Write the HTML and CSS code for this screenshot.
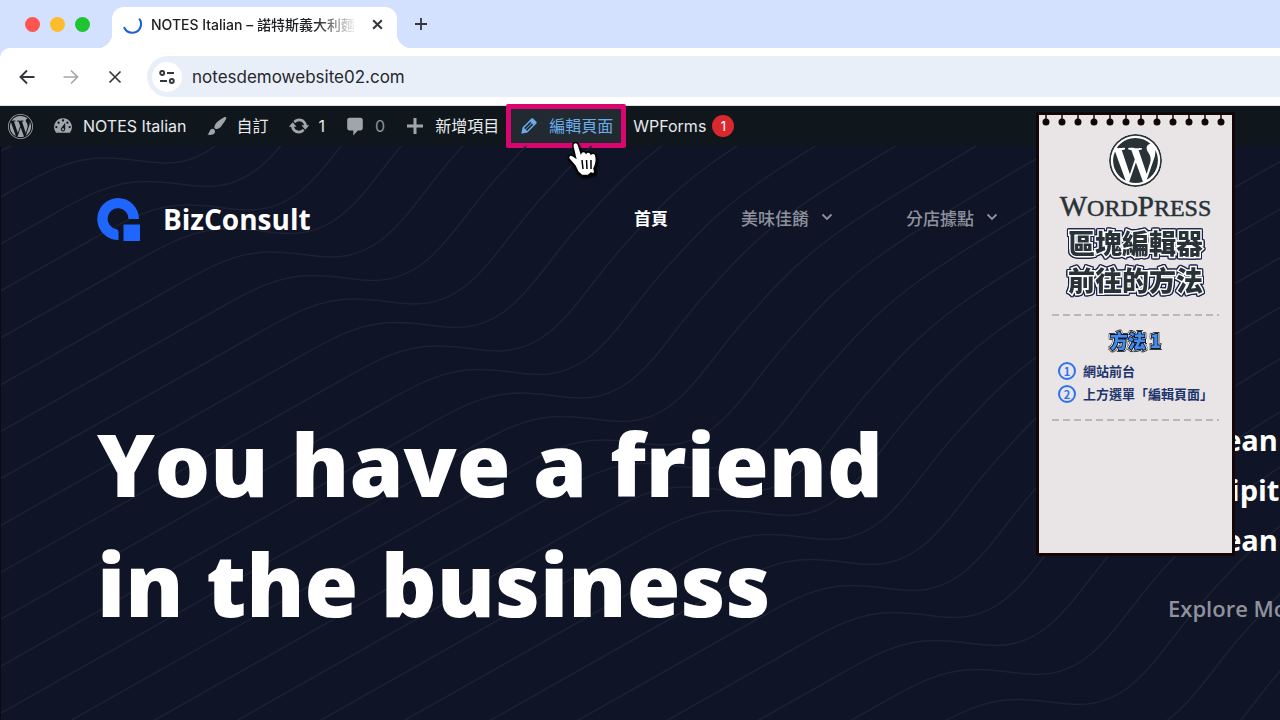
FILE: index.html
```
<!DOCTYPE html>
<html lang="zh-Hant">
<head>
  <meta charset="UTF-8">
  <meta name="viewport" content="width=device-width, initial-scale=1">
  <title>NOTES Italian – 諾特斯義大利麵</title>
  <link rel="stylesheet" href="styles.css">
</head>
<body>

<svg class="defs" aria-hidden="true">
  <symbol id="wp-logo" viewBox="0 0 24 24">
    <path d="M12 0a12 12 0 1 0 0 24 12 12 0 0 0 0-24zm0 .8a11.200 11.200 0 1 1 0 22.400A11.200 11.200 0 0 1 12 .8z" fill-rule="evenodd"/>
    <path transform="translate(.72 .72) scale(.94)" d="M21.469 6.825c.84 1.537 1.318 3.3 1.318 5.175 0 3.979-2.156 7.456-5.363 9.325l3.295-9.527c.615-1.54.82-2.771.82-3.864 0-.405-.026-.78-.07-1.11m-7.981.105c.647-.03 1.232-.105 1.232-.105.582-.075.514-.93-.067-.899 0 0-1.755.135-2.88.135-1.064 0-2.85-.15-2.85-.15-.585-.03-.661.855-.075.885 0 0 .54.061 1.125.09l1.68 4.605-2.37 7.08L5.354 6.9c.649-.03 1.234-.1 1.234-.1.585-.075.516-.93-.065-.896 0 0-1.746.138-2.874.138-.2 0-.438-.008-.69-.015C4.911 3.15 8.235 1.215 12 1.215c2.809 0 5.365 1.072 7.286 2.833-.046-.003-.091-.009-.141-.009-1.06 0-1.812.923-1.812 1.914 0 .89.513 1.643 1.06 2.531.411.72.89 1.643.89 2.977 0 .915-.354 1.994-.821 3.479l-1.075 3.585-3.9-11.61.001.014zM12 22.784c-1.059 0-2.081-.153-3.048-.437l3.237-9.406 3.315 9.087c.024.053.05.101.078.149-1.12.393-2.325.609-3.582.609M1.211 12c0-1.564.336-3.05.935-4.39L7.29 21.709C3.694 19.96 1.212 16.271 1.211 12"/>
  </symbol>
  <symbol id="chevron" viewBox="0 0 12 12"><path d="M1.5 3.5 6 8l4.5-4.5" fill="none" stroke="currentColor" stroke-width="1.8"/></symbol>
</svg>

<header class="browser">
  <div class="tab-strip">
    <div class="lights">
      <span class="light red"></span>
      <span class="light yellow"></span>
      <span class="light green"></span>
    </div>
    <div class="tab">
      <svg class="spinner" viewBox="0 0 20 20"><path d="M1.400 13.500A9.300 9.300 0 0 0 18.500 12.500A9.300 9.300 0 0 0 17.500 4.500" fill="none" stroke="#1a62d6" stroke-width="2.200" stroke-linecap="round"/></svg>
      <span class="tab-title">NOTES Italian – 諾特斯義大利麵</span>
      <button class="tab-close" aria-label="Close tab"><svg viewBox="0 0 12 12"><path d="M2 2l8 8M10 2l-8 8" stroke="currentColor" stroke-width="1.900"/></svg></button>
    </div>
    <button class="new-tab" aria-label="New tab"><svg viewBox="0 0 14 14"><path d="M7 1v12M1 7h12" stroke="currentColor" stroke-width="1.800"/></svg></button>
  </div>
  <div class="toolbar">
    <button class="tool" aria-label="Back"><svg viewBox="0 0 16 16"><path d="M15.500 8H1.500M8 1.500 1.500 8 8 14.500" fill="none" stroke="currentColor" stroke-width="1.900"/></svg></button>
    <button class="tool off" aria-label="Forward" disabled><svg viewBox="0 0 16 16"><path d="M.5 8h14M8 1.500 14.500 8 8 14.500" fill="none" stroke="currentColor" stroke-width="1.700"/></svg></button>
    <button class="tool" aria-label="Stop"><svg viewBox="0 0 16 16"><path d="M2.500 2.500l11 11M13.500 2.500l-11 11" stroke="currentColor" stroke-width="1.700"/></svg></button>
    <div class="address">
      <button class="site-info" aria-label="Site information"><svg viewBox="0 0 16 16" fill="none" stroke="currentColor" stroke-width="1.900"><circle cx="3.200" cy="4" r="2"/><path d="M8 4h7M1 12h7"/><circle cx="12.800" cy="12" r="2"/></svg></button>
      <input class="url" type="text" aria-label="Address" value="notesdemowebsite02.com">
    </div>
  </div>
</header>

<nav class="admin-bar" aria-label="Toolbar">
  <a href="#" aria-label="WordPress"><svg class="wp"><use href="#wp-logo"/></svg></a>
  <a href="#"><svg viewBox="1 1 18 18"><path d="M3.760 16h12.480A7.998 7.998 0 0 0 10 3a7.998 7.998 0 0 0-6.240 13zM10 4c.55 0 1 .45 1 1s-.45 1-1 1-1-.45-1-1 .45-1 1-1zM6 6c.55 0 1 .45 1 1s-.45 1-1 1-1-.45-1-1 .45-1 1-1zm8 0c.55 0 1 .45 1 1s-.45 1-1 1-1-.45-1-1 .45-1 1-1zm-5.370 5.550L12 7v6c0 1.100-.9 2-2 2s-2-.9-2-2c0-.57.24-1.080.63-1.450zM4 10c.55 0 1 .45 1 1s-.45 1-1 1-1-.45-1-1 .45-1 1-1zm12 0c.55 0 1 .45 1 1s-.45 1-1 1-1-.45-1-1 .45-1 1-1zm-5 3c0-.55-.45-1-1-1s-1 .45-1 1 .45 1 1 1 1-.45 1-1z"/></svg>NOTES Italian</a>
  <a href="#"><svg viewBox="1 1 18 18"><path d="M18.330 3.570s.27-.8-.31-1.360c-.53-.52-1.220-.24-1.220-.24-.61.3-5.760 3.470-7.670 5.570-.86.96-2.060 3.790-1.090 4.820.92.98 3.960-.17 4.790-1 2.060-2.060 5.210-7.170 5.500-7.790zM1.400 17.650c2.370-1.560 1.460-3.410 3.230-4.640.93-.65 2.220-.62 3.080.29.63.67.8 2.570-.16 3.460-1.570 1.450-4 1.550-6.150.89z"/></svg>自訂</a>
  <a href="#"><svg viewBox="1 1 18 18"><path d="M10.200 3.280c3.530 0 6.430 2.610 6.920 6h2.080l-3.500 4-3.500-4h2.320c-.45-1.970-2.210-3.450-4.320-3.450-1.450 0-2.730.71-3.540 1.780L4.950 5.660C6.230 4.200 8.110 3.280 10.200 3.280zm-.4 13.440c-3.520 0-6.430-2.610-6.920-6H.8l3.500-4c1.170 1.330 2.330 2.670 3.500 4H5.480c.45 1.970 2.210 3.450 4.320 3.450 1.450 0 2.730-.71 3.540-1.780l1.710 1.950c-1.280 1.460-3.150 2.380-5.250 2.380z"/></svg>1</a>
  <a href="#" class="dim"><svg viewBox="1 1 18 18"><path d="M5 2.500h10c1.100 0 2 .9 2 2V12c0 1.100-.9 2-2 2h-2.500L8.500 18.500V14H5c-1.100 0-2-.9-2-2V4.500c0-1.100.9-2 2-2z"/></svg>0</a>
  <a href="#"><svg viewBox="0 0 20 20"><path d="M8.500 2h3v6.500H18v3h-6.500V18h-3v-6.500H2v-3h6.500z"/></svg>新增項目</a>
  <a href="#" class="edit"><svg viewBox="1 1 18 18"><path d="M13.890 3.390l2.710 2.720c.46.46.42 1.240.03 1.640l-8.010 8.020-5.560 1.160 1.160-5.580s7.600-7.630 7.990-8.030c.39-.39 1.220-.39 1.680.07zm-2.730 2.790l-5.590 5.610 1.110 1.110 5.540-5.650zm-2.970 8.230l5.580-5.600-1.070-1.080-5.590 5.600z"/></svg>編輯頁面</a>
  <a href="#" class="forms">WPForms <span class="badge">1</span></a>
</nav>

<main class="hero">
  <svg class="waves" id="waves" viewBox="0 146 1280 574" preserveAspectRatio="xMinYMin slice" aria-hidden="true"></svg>

  <div class="site-nav">
    <a class="brand" href="#">
      <svg viewBox="0 0 43 43" fill="#1f66ff"><path d="M21 0A21 21 0 0 1 42 21H31.500A10.500 10.500 0 1 0 19 31Q21.500 31.500 21.500 34V42A21 21 0 0 1 21 0z"/><path d="M26.500 26.500H43V43H26.500z"/></svg>
      BizConsult
    </a>
    <nav class="menu" aria-label="Main">
      <a class="current" href="#">首頁</a>
      <a href="#">美味佳餚 <svg><use href="#chevron"/></svg></a>
      <a href="#">分店據點 <svg><use href="#chevron"/></svg></a>
    </nav>
  </div>

  <div class="hero-body">
    <h1>You have a friend<br>in the business</h1>
    <div class="intro">
      <p>Aenean<br>suscipit<br>Aenean</p>
      <a href="#">Explore More</a>
    </div>
  </div>
</main>

<aside class="note">
  <svg class="rings" viewBox="0 0 191 14" aria-hidden="true">
    <path d="M6 0v7M22 0v7M38 0v7M54 0v7M70 0v7M86 0v7M101 0v7M117 0v7M133 0v7M149 0v7M165 0v7M181 0v7" stroke="#140607" stroke-width="1.500"/>
    <path d="M6 7h0M22 7h0M38 7h0M54 7h0M70 7h0M86 7h0M101 7h0M117 7h0M133 7h0M149 7h0M165 7h0M181 7h0" stroke="#140607" stroke-width="7" stroke-linecap="round"/>
  </svg>
  <svg class="note-logo"><use href="#wp-logo"/></svg>
  <div class="wordmark"><b>W</b>ORD<b>P</b>RESS</div>
  <h2>區塊編輯器<br>前往的方法</h2>
  <hr>
  <h3>方法 1</h3>
  <ol>
    <li>網站前台</li>
    <li>上方選單「編輯頁面」</li>
  </ol>
  <hr>
</aside>

<svg class="pointer" viewBox="0 0 36 38" aria-hidden="true">
  <path d="M9 3c2-1 4 0 4.500 2L16 13c1-2 4-2 5 0 1-1.500 4-1.500 5 1 2-1.500 5-.5 5 2.500 1 5 0 8-2 12l1 4-3 1.500-1-1-3 2.500h-6l-4-3.500-3-6-6-7c-1.500-2.500 1-5 3.500-3.500l3 2L8 7C7.500 5 7.500 4 9 3z" fill="#fff" stroke="#000" stroke-width="1.500"/>
  <path d="M17 20l1 9M21.500 20l.5 9M26 20v9" stroke="#000" stroke-width="1.500"/>
</svg>

<script>
  // the same curve repeated down the diagonal
  const waves = document.getElementById("waves");
  for (let k = -5; k <= 32; k++) {
    const extra = k > 15 ? (k - 15) * (k - 15) * 0.5 : 0;
    const path = document.createElementNS("http://www.w3.org/2000/svg", "path");
    path.setAttribute("d", "M-1400 731L-160 31C-120 8-95-5-61-5C-35-5-20 0 0 0C60 0 82-60 131-111C190-178 220-195 351-274L1100-700");
    path.setAttribute("transform", `translate(${165 + k * 41.5} ${163 + k * 23.5 + extra})`);
    waves.appendChild(path);
  }
</script>

</body>
</html>
```
FILE: styles.css
```
* {
  box-sizing: border-box;
}
body {
  margin: 0;
  height: 100vh;
  display: flex;
  flex-direction: column;
  position: relative;
  overflow: hidden;
  background: #0f1426;
  font-family: Inter, "Noto Sans CJK TC", sans-serif;
}
a {
  color: inherit;
  text-decoration: none;
}
button {
  padding: 0;
  border: none;
  background: none;
  color: inherit;
}
svg {
  display: block;
  flex-shrink: 0;
}
.defs {
  display: none;
}

/* browser window */
.browser {
  background: #d3e1ff;
  color: #33363b;
}
.tab-strip {
  display: flex;
  height: 48px;
  padding-left: 25px;
}
.lights {
  display: flex;
  align-items: center;
  gap: 10px;
  width: 87px;
}
.light {
  width: 15px;
  height: 15px;
  border-radius: 50%;
}
.red { background: #fe5550; }
.yellow { background: #febb2c; }
.green { background: #1fc433; }
.tab {
  position: relative;
  display: flex;
  align-items: center;
  width: 285px;
  margin-top: 7px;
  padding: 0 13px 7px 11px;
  border-radius: 12px 12px 0 0;
  background: #fff;
}
.tab::before,
.tab::after {
  content: "";
  position: absolute;
  bottom: 0;
  width: 14px;
  height: 14px;
}
.tab::before {
  right: 100%;
  background: radial-gradient(circle at 0 0, transparent 14px, #fff 14px);
}
.tab::after {
  left: 100%;
  background: radial-gradient(circle at 100% 0, transparent 14px, #fff 14px);
}
.spinner {
  width: 19px;
  height: 19px;
}
.tab-title {
  flex: 1;
  margin: 0 14px 0 9px;
  overflow: hidden;
  white-space: nowrap;
  font-size: 14px;
  font-weight: 500;
  color: #202124;
  mask-image: linear-gradient(to right, #000 80%, transparent);
}
.tab-close svg {
  width: 13px;
  height: 13px;
}
.new-tab {
  margin-left: 17px;
}
.new-tab svg {
  width: 14px;
  height: 14px;
}
.toolbar {
  display: flex;
  align-items: center;
  gap: 28px;
  height: 58px;
  padding-left: 19px;
  border-bottom: 1px solid #dfe2e6;
  border-radius: 10px 0 0 0;
  background: #fff;
}
.tool svg {
  width: 16px;
  height: 16px;
}
.off {
  color: #a5a7aa;
}
.address {
  flex: 1;
  display: flex;
  align-items: center;
  gap: 10px;
  height: 41px;
  margin-left: -4px;
  padding-left: 5px;
  border-radius: 21px 0 0 21px;
  background: #e9eff9;
}
.site-info {
  display: grid;
  place-items: center;
  width: 30px;
  height: 30px;
  border-radius: 50%;
  background: #fff;
}
.site-info svg {
  width: 16px;
  height: 16px;
}
.url {
  flex: 1;
  padding: 0;
  border: none;
  outline: none;
  background: none;
  font-family: inherit;
  font-size: 17px;
  color: #25272b;
}

/* admin bar */
.admin-bar {
  display: flex;
  align-items: center;
  gap: 20px;
  height: 40px;
  padding-left: 8px;
  background: #0f171c;
  color: #e8eaec;
  font-size: 16px;
  line-height: 20px;
  white-space: nowrap;
}
.admin-bar a {
  display: flex;
  align-items: center;
  gap: 10px;
}
.admin-bar svg {
  width: 20px;
  height: 20px;
  fill: #a0a5ac;
}
.admin-bar .wp {
  width: 25px;
  height: 25px;
}
.admin-bar .dim {
  color: #8f959b;
}
.admin-bar .edit {
  position: relative;
  height: 44px;
  margin: 0 -13px;
  padding: 0 8px;
  border: 5px solid #d9066f;
  border-radius: 2px;
  background: #202a30;
  color: #6cabea;
}
.admin-bar .edit svg {
  fill: #6cabea;
}
.admin-bar .forms {
  gap: 6px;
}
.badge {
  width: 22px;
  border-radius: 50%;
  background: #d9292f;
  color: #fff;
  font-size: 13px;
  line-height: 22px;
  text-align: center;
}

/* site */
.hero {
  flex: 1;
  position: relative;
  overflow: hidden;
  padding: 48px 0 0 96px;
  border-left: 1px solid #080b14;
  color: #fff;
  font-family: "Open Sans", "Noto Sans CJK TC", sans-serif;
}
.waves {
  position: absolute;
  inset: 0;
  width: 100%;
  height: 100%;
}
.waves path {
  fill: none;
  stroke: #1d2233;
  stroke-width: 1.5;
}
.site-nav {
  position: relative;
  display: flex;
  align-items: center;
  height: 50px;
}
.brand {
  display: flex;
  align-items: center;
  gap: 23px;
  width: 537px;
  font-size: 28px;
  font-weight: 700;
}
.brand svg {
  width: 43px;
  height: 43px;
}
.menu {
  display: flex;
  gap: 73px;
  padding-bottom: 4px;
  font-size: 17px;
  font-weight: 500;
  color: #8f929d;
}
.menu a {
  display: flex;
  align-items: center;
  gap: 12px;
}
.menu svg {
  width: 12px;
  height: 12px;
}
.menu .current {
  color: #fff;
  font-weight: 700;
}
.hero-body {
  position: relative;
  display: flex;
  margin-top: 159px;
  white-space: nowrap;
}
h1 {
  width: 1071px;
  flex-shrink: 0;
  margin: 0;
  font-size: 87px;
  font-weight: 800;
  line-height: 120px;
}
.intro {
  padding-top: 12px;
}
.intro p {
  margin: 0 0 28px;
  font-size: 29px;
  font-weight: 700;
  line-height: 50px;
}
.intro a {
  color: #8f929d;
  font-size: 22px;
  font-weight: 600;
}

/* paper note over the page */
.note {
  position: absolute;
  top: 112px;
  right: 45px;
  width: 199px;
  height: 444px;
  border: 3px solid #140607;
  background: #e9e5e6;
  text-align: center;
  font-family: "Noto Sans CJK TC", sans-serif;
}
.rings {
  width: 100%;
  height: 14px;
}
.note-logo {
  width: 53px;
  height: 53px;
  margin: 5px auto 0;
  border-radius: 50%;
  background: #fff;
  fill: #283237;
}
.wordmark {
  margin-top: 3px;
  color: #283237;
  font-family: "Liberation Serif", serif;
  font-size: 24px;
  line-height: 32px;
  -webkit-text-stroke: 0.5px #283237;
}
.wordmark b {
  font-size: 29px;
  font-weight: 400;
}
.note h2 {
  margin: 0 0 16px;
  color: #283237;
  font-size: 27px;
  font-weight: 900;
  line-height: 37px;
  paint-order: stroke fill;
  -webkit-text-stroke: 3px #fff;
  filter: drop-shadow(1px 0 #1a2148) drop-shadow(-1px 0 #1a2148) drop-shadow(0 1px #1a2148) drop-shadow(0 -1px #1a2148);
}
.note hr {
  height: 2px;
  margin: 0 13px;
  border: none;
  background: repeating-linear-gradient(to right, #b9b7b8 0 7px, transparent 7px 11px);
}
.note h3 {
  margin: 11px 0 6px;
  color: #438eed;
  font-size: 18px;
  font-weight: 900;
  line-height: 26px;
  paint-order: stroke fill;
  -webkit-text-stroke: 2px #0c1530;
  filter: drop-shadow(1px 0 #fff) drop-shadow(-1px 0 #fff) drop-shadow(0 1px #3b3b30) drop-shadow(0 -1px #3b3b30);
}
.note ol {
  margin: 0 0 14px;
  padding: 0 0 0 19px;
  list-style: none;
  counter-reset: step;
  color: #1c346b;
  font-size: 13px;
  font-weight: 700;
  line-height: 23px;
  text-align: left;
  white-space: nowrap;
}
.note li {
  display: flex;
  align-items: center;
  gap: 7px;
  counter-increment: step;
}
.note li::before {
  content: counter(step);
  box-sizing: border-box;
  width: 18px;
  height: 18px;
  border: 2px solid #2e72f0;
  border-radius: 50%;
  color: #2e72f0;
  font-size: 11px;
  line-height: 14px;
  text-align: center;
}
.pointer {
  position: absolute;
  top: 140px;
  left: 565px;
  width: 36px;
  height: 38px;
  filter: drop-shadow(1px 2px 1px #000);
}
```
